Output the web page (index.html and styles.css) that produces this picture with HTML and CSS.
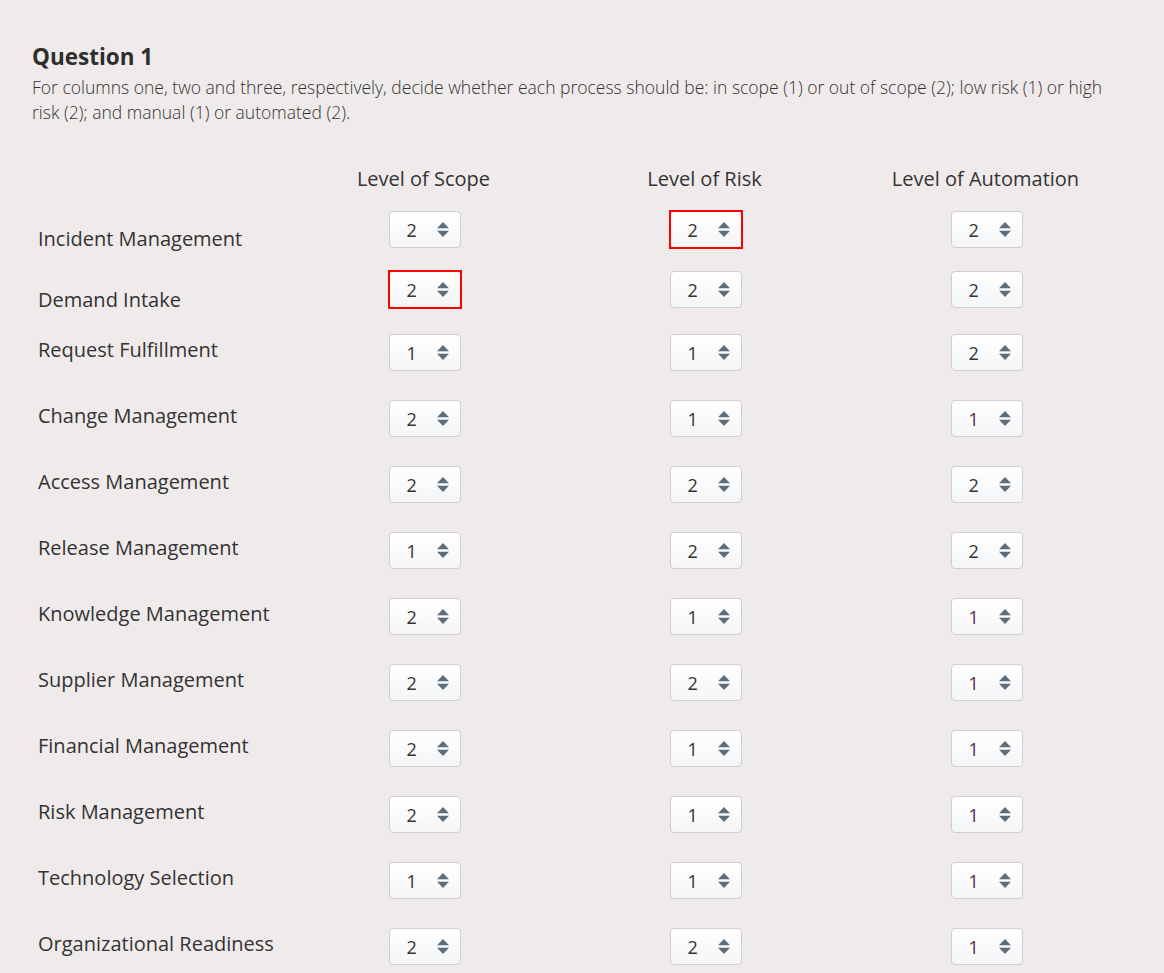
FILE: index.html
```html
<!DOCTYPE html>
<html lang="en">
<head>
<meta charset="utf-8">
<title>Question 1</title>
<link rel="stylesheet" href="styles.css">
</head>
<body>
<div class="page">
  <h1 class="title">Question 1</h1>
  <p class="desc">For columns one, two and three, respectively, decide whether each process should be: in scope (1) or out of scope (2); low risk (1) or high risk (2); and manual (1) or automated (2).</p>

  <div class="grid">
    <div class="head-row">
      <div></div>
      <div class="col-head">Level of Scope</div>
      <div class="col-head">Level of Risk</div>
      <div class="col-head">Level of Automation</div>
    </div>

    <div class="row row-first">
      <div class="label">Incident Management</div>
      <div class="cell"><div class="sel"><span class="val">2</span><svg class="arr" viewBox="0 0 12 15"><path d="M6 0L12 6.3H0Z M0 8.7H12L6 15Z"/></svg></div></div>
      <div class="cell"><div class="sel sel-error"><span class="val">2</span><svg class="arr" viewBox="0 0 12 15"><path d="M6 0L12 6.3H0Z M0 8.7H12L6 15Z"/></svg></div></div>
      <div class="cell"><div class="sel"><span class="val">2</span><svg class="arr" viewBox="0 0 12 15"><path d="M6 0L12 6.3H0Z M0 8.7H12L6 15Z"/></svg></div></div>
    </div>

    <div class="row row-second">
      <div class="label">Demand Intake</div>
      <div class="cell"><div class="sel sel-error"><span class="val">2</span><svg class="arr" viewBox="0 0 12 15"><path d="M6 0L12 6.3H0Z M0 8.7H12L6 15Z"/></svg></div></div>
      <div class="cell"><div class="sel"><span class="val">2</span><svg class="arr" viewBox="0 0 12 15"><path d="M6 0L12 6.3H0Z M0 8.7H12L6 15Z"/></svg></div></div>
      <div class="cell"><div class="sel"><span class="val">2</span><svg class="arr" viewBox="0 0 12 15"><path d="M6 0L12 6.3H0Z M0 8.7H12L6 15Z"/></svg></div></div>
    </div>

    <div class="row">
      <div class="label">Request Fulfillment</div>
      <div class="cell"><div class="sel"><span class="val">1</span><svg class="arr" viewBox="0 0 12 15"><path d="M6 0L12 6.3H0Z M0 8.7H12L6 15Z"/></svg></div></div>
      <div class="cell"><div class="sel"><span class="val">1</span><svg class="arr" viewBox="0 0 12 15"><path d="M6 0L12 6.3H0Z M0 8.7H12L6 15Z"/></svg></div></div>
      <div class="cell"><div class="sel"><span class="val">2</span><svg class="arr" viewBox="0 0 12 15"><path d="M6 0L12 6.3H0Z M0 8.7H12L6 15Z"/></svg></div></div>
    </div>

    <div class="row">
      <div class="label">Change Management</div>
      <div class="cell"><div class="sel"><span class="val">2</span><svg class="arr" viewBox="0 0 12 15"><path d="M6 0L12 6.3H0Z M0 8.7H12L6 15Z"/></svg></div></div>
      <div class="cell"><div class="sel"><span class="val">1</span><svg class="arr" viewBox="0 0 12 15"><path d="M6 0L12 6.3H0Z M0 8.7H12L6 15Z"/></svg></div></div>
      <div class="cell"><div class="sel"><span class="val val-alt">1</span><svg class="arr" viewBox="0 0 12 15"><path d="M6 0L12 6.3H0Z M0 8.7H12L6 15Z"/></svg></div></div>
    </div>

    <div class="row">
      <div class="label">Access Management</div>
      <div class="cell"><div class="sel"><span class="val">2</span><svg class="arr" viewBox="0 0 12 15"><path d="M6 0L12 6.3H0Z M0 8.7H12L6 15Z"/></svg></div></div>
      <div class="cell"><div class="sel"><span class="val">2</span><svg class="arr" viewBox="0 0 12 15"><path d="M6 0L12 6.3H0Z M0 8.7H12L6 15Z"/></svg></div></div>
      <div class="cell"><div class="sel"><span class="val">2</span><svg class="arr" viewBox="0 0 12 15"><path d="M6 0L12 6.3H0Z M0 8.7H12L6 15Z"/></svg></div></div>
    </div>

    <div class="row">
      <div class="label">Release Management</div>
      <div class="cell"><div class="sel"><span class="val">1</span><svg class="arr" viewBox="0 0 12 15"><path d="M6 0L12 6.3H0Z M0 8.7H12L6 15Z"/></svg></div></div>
      <div class="cell"><div class="sel"><span class="val">2</span><svg class="arr" viewBox="0 0 12 15"><path d="M6 0L12 6.3H0Z M0 8.7H12L6 15Z"/></svg></div></div>
      <div class="cell"><div class="sel"><span class="val">2</span><svg class="arr" viewBox="0 0 12 15"><path d="M6 0L12 6.3H0Z M0 8.7H12L6 15Z"/></svg></div></div>
    </div>

    <div class="row">
      <div class="label">Knowledge Management</div>
      <div class="cell"><div class="sel"><span class="val">2</span><svg class="arr" viewBox="0 0 12 15"><path d="M6 0L12 6.3H0Z M0 8.7H12L6 15Z"/></svg></div></div>
      <div class="cell"><div class="sel"><span class="val">1</span><svg class="arr" viewBox="0 0 12 15"><path d="M6 0L12 6.3H0Z M0 8.7H12L6 15Z"/></svg></div></div>
      <div class="cell"><div class="sel"><span class="val val-alt">1</span><svg class="arr" viewBox="0 0 12 15"><path d="M6 0L12 6.3H0Z M0 8.7H12L6 15Z"/></svg></div></div>
    </div>

    <div class="row">
      <div class="label">Supplier Management</div>
      <div class="cell"><div class="sel"><span class="val">2</span><svg class="arr" viewBox="0 0 12 15"><path d="M6 0L12 6.3H0Z M0 8.7H12L6 15Z"/></svg></div></div>
      <div class="cell"><div class="sel"><span class="val">2</span><svg class="arr" viewBox="0 0 12 15"><path d="M6 0L12 6.3H0Z M0 8.7H12L6 15Z"/></svg></div></div>
      <div class="cell"><div class="sel"><span class="val val-alt">1</span><svg class="arr" viewBox="0 0 12 15"><path d="M6 0L12 6.3H0Z M0 8.7H12L6 15Z"/></svg></div></div>
    </div>

    <div class="row">
      <div class="label">Financial Management</div>
      <div class="cell"><div class="sel"><span class="val">2</span><svg class="arr" viewBox="0 0 12 15"><path d="M6 0L12 6.3H0Z M0 8.7H12L6 15Z"/></svg></div></div>
      <div class="cell"><div class="sel"><span class="val">1</span><svg class="arr" viewBox="0 0 12 15"><path d="M6 0L12 6.3H0Z M0 8.7H12L6 15Z"/></svg></div></div>
      <div class="cell"><div class="sel"><span class="val val-alt">1</span><svg class="arr" viewBox="0 0 12 15"><path d="M6 0L12 6.3H0Z M0 8.7H12L6 15Z"/></svg></div></div>
    </div>

    <div class="row">
      <div class="label">Risk Management</div>
      <div class="cell"><div class="sel"><span class="val">2</span><svg class="arr" viewBox="0 0 12 15"><path d="M6 0L12 6.3H0Z M0 8.7H12L6 15Z"/></svg></div></div>
      <div class="cell"><div class="sel"><span class="val">1</span><svg class="arr" viewBox="0 0 12 15"><path d="M6 0L12 6.3H0Z M0 8.7H12L6 15Z"/></svg></div></div>
      <div class="cell"><div class="sel"><span class="val val-alt">1</span><svg class="arr" viewBox="0 0 12 15"><path d="M6 0L12 6.3H0Z M0 8.7H12L6 15Z"/></svg></div></div>
    </div>

    <div class="row">
      <div class="label">Technology Selection</div>
      <div class="cell"><div class="sel"><span class="val">1</span><svg class="arr" viewBox="0 0 12 15"><path d="M6 0L12 6.3H0Z M0 8.7H12L6 15Z"/></svg></div></div>
      <div class="cell"><div class="sel"><span class="val">1</span><svg class="arr" viewBox="0 0 12 15"><path d="M6 0L12 6.3H0Z M0 8.7H12L6 15Z"/></svg></div></div>
      <div class="cell"><div class="sel"><span class="val val-alt">1</span><svg class="arr" viewBox="0 0 12 15"><path d="M6 0L12 6.3H0Z M0 8.7H12L6 15Z"/></svg></div></div>
    </div>

    <div class="row">
      <div class="label">Organizational Readiness</div>
      <div class="cell"><div class="sel"><span class="val">2</span><svg class="arr" viewBox="0 0 12 15"><path d="M6 0L12 6.3H0Z M0 8.7H12L6 15Z"/></svg></div></div>
      <div class="cell"><div class="sel"><span class="val">2</span><svg class="arr" viewBox="0 0 12 15"><path d="M6 0L12 6.3H0Z M0 8.7H12L6 15Z"/></svg></div></div>
      <div class="cell"><div class="sel"><span class="val val-alt">1</span><svg class="arr" viewBox="0 0 12 15"><path d="M6 0L12 6.3H0Z M0 8.7H12L6 15Z"/></svg></div></div>
    </div>
  </div>
</div>
</body>
</html>
```

FILE: styles.css
```css
html, body {
  margin: 0;
  padding: 0;
  background: #efebea;
}

body {
  font-family: "Open Sans", "Noto Sans", sans-serif;
  color: #333;
}

.page {
  padding: 41px 36px 0 32px;
}

.title {
  margin: 0;
  font-size: 22.5px;
  line-height: 32px;
  font-weight: 700;
  color: #2e2e2e;
}

.desc {
  max-width: 1090px;
  margin: 2px 0 0;
  font-size: 17.5px;
  line-height: 25px;
  font-weight: 300;
  color: #333;
}

.grid {
  margin-top: 40px;
}

.head-row,
.row {
  display: grid;
  grid-template-columns: 252px repeat(3, 281px);
}

.head-row {
  margin-bottom: 19px;
}

.col-head {
  text-align: center;
  font-size: 20px;
  line-height: 27px;
  color: #333;
  padding-right: 2px;
}

.row {
  height: 66px;
  align-items: start;
}

.row-first {
  height: 60px;
}

.row-second {
  height: 63px;
}

.label {
  padding: 2px 0 0 6px;
  font-size: 20px;
  line-height: 27px;
  color: #333;
}

.row-first .label {
  padding-top: 14px;
}

.row-second .label {
  padding-top: 15px;
}

.cell {
  display: flex;
  justify-content: center;
}

.sel {
  position: relative;
  box-sizing: border-box;
  width: 72px;
  height: 37px;
  display: flex;
  align-items: center;
  padding-left: 17px;
  border: 1px solid #cfcfcf;
  border-radius: 4px;
  background: linear-gradient(#ffffff, #f3f5f7);
}

.sel-error::after {
  content: "";
  position: absolute;
  inset: -2px;
  border: 2px solid #f00;
  pointer-events: none;
}

.val {
  font-size: 18px;
  line-height: 24px;
  color: #333;
  width: 20px;
}

.val-alt {
  color: #5a2b4a;
}

.arr {
  width: 12px;
  height: 15px;
  margin-left: 10px;
  fill: #5d6d7a;
}
```
